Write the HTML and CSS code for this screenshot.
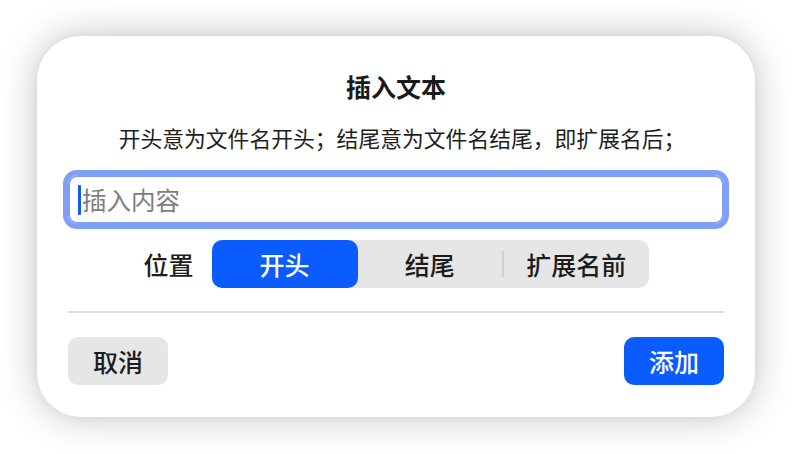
FILE: index.html
```html
<!DOCTYPE html>
<html lang="zh-CN">
<head>
<meta charset="utf-8">
<title>插入文本</title>
<link rel="stylesheet" href="styles.css">
</head>
<body>
<div class="stage">
  <div class="dialog">
    <div class="title">插入文本</div>
    <div class="desc">开头意为文件名开头；结尾意为文件名结尾，即扩展名后；</div>
    <div class="field">
      <span class="caret"></span>
      <span class="placeholder">插入内容</span>
    </div>
    <div class="position">
      <span class="pos-label">位置</span>
      <div class="segmented">
        <div class="seg seg-active">开头</div>
        <div class="seg">结尾</div>
        <div class="seg-divider"></div>
        <div class="seg">扩展名前</div>
      </div>
    </div>
    <div class="rule"></div>
    <div class="actions">
      <div class="btn btn-cancel">取消</div>
      <div class="btn btn-add">添加</div>
    </div>
  </div>
</div>
</body>
</html>
```
FILE: styles.css
```css
html, body {
  margin: 0;
  padding: 0;
  background: #ffffff;
}
body {
  width: 792px;
  height: 454px;
  overflow: hidden;
  font-family: "Noto Sans CJK SC", "Noto Sans", sans-serif;
  color: #1d1d1f;
}
.stage {
  padding: 36px 37px;
}
.dialog {
  box-sizing: border-box;
  width: 718px;
  height: 381px;
  background: #ffffff;
  border-radius: 44px;
  box-shadow: 0 0 38px rgba(0, 0, 0, 0.24), 0 0 8px rgba(0, 0, 0, 0.05);
  padding: 35px 31px 32px;
  display: flex;
  flex-direction: column;
}
.title {
  height: 30px;
  line-height: 30px;
  font-size: 25px;
  font-weight: 700;
  text-align: center;
  color: #1a1a1a;
}
.desc {
  margin-top: 24px;
  height: 26px;
  line-height: 26px;
  font-size: 21.8px;
  text-align: center;
  color: #1d1d1d;
  padding-left: 12px;
}
.field {
  margin-top: 24px;
  box-sizing: border-box;
  height: 49px;
  border: 2px solid #7fa0f6;
  border-radius: 9px;
  box-shadow: 0 0 0 5px #7fa0f6;
  display: flex;
  align-items: center;
  padding-left: 8px;
}
.caret {
  width: 3px;
  height: 30px;
  background: #0b5cff;
  border-radius: 1px;
}
.placeholder {
  font-size: 24.5px;
  line-height: 30px;
  color: #7d7d7d;
  margin-left: 1px;
}
.position {
  margin-top: 16px;
  display: flex;
  justify-content: center;
  align-items: center;
  gap: 18px;
  height: 48px;
}
.pos-label {
  font-size: 25px;
  font-weight: 500;
  color: #1d1d1d;
}
.segmented {
  display: flex;
  align-items: center;
  width: 437px;
  height: 48px;
  background: #e6e6e6;
  border-radius: 10px;
}
.seg {
  flex: 1;
  height: 48px;
  display: flex;
  align-items: center;
  justify-content: center;
  font-size: 25px;
  font-weight: 500;
  color: #1d1d1d;
}
.seg-active {
  flex: 0 0 146px;
  background: #0b5cff;
  color: #ffffff;
  border-radius: 10px;
}
.seg-divider {
  width: 2px;
  height: 26px;
  background: #cfcfcf;
}
.rule {
  margin-top: 23px;
  height: 2px;
  background: #dedede;
}
.actions {
  margin-top: 24px;
  display: flex;
  justify-content: space-between;
}
.btn {
  width: 100px;
  height: 48px;
  border-radius: 10px;
  display: flex;
  align-items: center;
  justify-content: center;
  font-size: 25px;
  font-weight: 500;
}
.btn-cancel {
  background: #e6e6e6;
  color: #1d1d1d;
}
.btn-add {
  background: #0b5cff;
  color: #ffffff;
}
```
